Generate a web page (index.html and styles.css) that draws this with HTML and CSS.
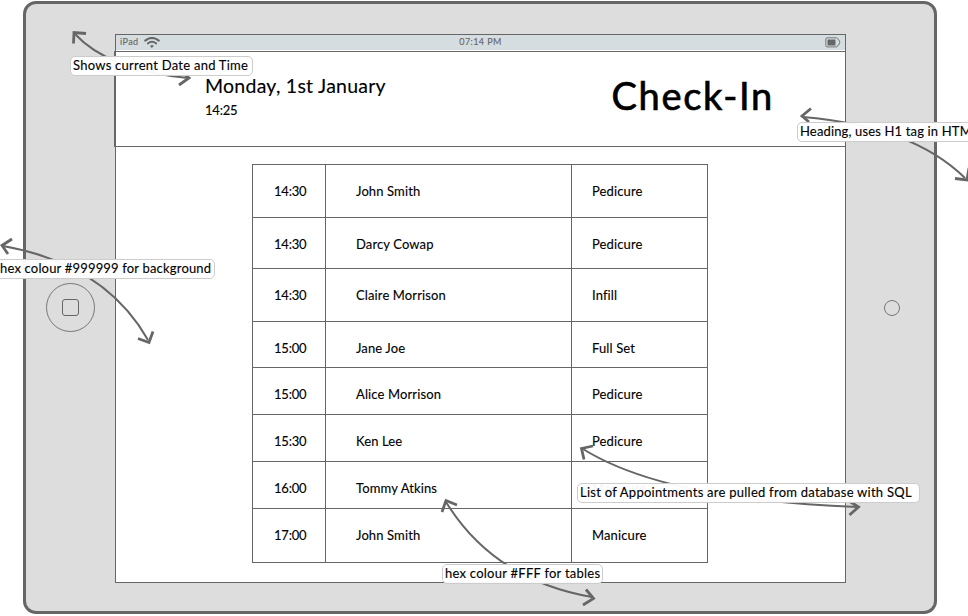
FILE: index.html
```html
<!DOCTYPE html>
<html lang="en">
<head>
<meta charset="utf-8">
<title>Check-In</title>
<link rel="stylesheet" href="styles.css">
</head>
<body>
<div class="device">
  <div class="bezel bezel-left"><div class="home"><div class="home-mark"></div></div></div>
  <main class="screen">
    <div class="status">
      <div class="carrier"><span>iPad</span>
        <svg width="16" height="12" viewBox="0 0 16 12" fill="none" stroke="#666" stroke-linecap="round"><path d="M1.2 3.6Q8-1.8 14.8 3.6" stroke-width="2"/><path d="M3.8 6.4Q8 3 12.2 6.4" stroke-width="1.9"/><path d="M6.6 8.9Q8 7.8 9.4 8.9L8 10.4Z" fill="#666" stroke-width=".7"/></svg>
      </div>
      <span class="clock">07:14 PM</span>
      <svg class="battery" width="16" height="11" viewBox="0 0 16 11" fill="none" stroke="#777"><path d="M2 .8H11.5Q12.8.8 13 2.5Q14.8 3 14.8 5.3Q14.8 7.8 13 8Q12.8 9.9 11.5 9.9H2Q.8 9.9.8 8.7V2Q.8.8 2 .8Z"/><path d="M2.5 2.5H10.5V8.5H2.5Z" fill="#666" stroke="none"/></svg>
    </div>
    <header class="top">
      <div class="when"><div class="date">Monday, 1st January</div><div class="time">14:25</div></div>
      <h1>Check-In</h1>
    </header>
    <div class="list">
      <div class="row tall"><span>14:30</span><span>John Smith</span><span>Pedicure</span></div>
      <div class="row mid"><span>14:30</span><span>Darcy Cowap</span><span>Pedicure</span></div>
      <div class="row tall"><span>14:30</span><span>Claire Morrison</span><span>Infill</span></div>
      <div class="row short"><span>15:00</span><span>Jane Joe</span><span>Full Set</span></div>
      <div class="row"><span>15:00</span><span>Alice Morrison</span><span>Pedicure</span></div>
      <div class="row"><span>15:30</span><span>Ken Lee</span><span>Pedicure</span></div>
      <div class="row"><span>16:00</span><span>Tommy Atkins</span><span>Manicure</span></div>
      <div class="row last"><span>17:00</span><span>John Smith</span><span>Manicure</span></div>
    </div>
  </main>
  <div class="bezel bezel-right"><div class="camera"></div></div>
</div>

<svg class="arrows" width="968" height="616" viewBox="0 0 968 616">
  <g class="shaft">
    <path d="M75 34Q108 70 188 78"/>
    <path d="M803 117Q912 126 965 178"/>
    <path d="M3 246Q105 264 148 340"/>
    <path d="M583 449Q665 500 857 507"/>
    <path d="M446 502Q494 580 592 597"/>
  </g>
  <g class="head">
    <path d="M86 33.5L74 32.5L73.5 43.5"/><path d="M179 85L189 78L181 72"/>
    <path d="M811 108.5L802 116L809 122"/><path d="M955 178.5L967 180L969 168"/>
    <path d="M12 239L2 245.5L8 254"/><path d="M138 338.5L149 342.5L153 331.5"/>
    <path d="M593 446L581.5 448.5L584 459.5"/><path d="M849 501L858.5 507L849.5 515"/>
    <path d="M457 505L446 500.5L442 512"/><path d="M586 589.5L593.5 598.5L583 605"/>
  </g>
</svg>
<div class="note note-date">Shows current Date and Time</div>
<div class="note note-heading">Heading, uses H1 tag in HTML</div>
<div class="note note-background">hex colour #999999 for background</div>
<div class="note note-sql">List of Appointments are pulled from database with SQL</div>
<div class="note note-tables">hex colour #FFF for tables</div>
</body>
</html>
```
FILE: styles.css
```css
* { box-sizing: border-box; }
body {
  margin: 0;
  padding: 1px 0 0 23px;
  width: 968px;
  height: 616px;
  overflow: hidden;
  position: relative;
  background: #fff;
  color: #000;
  font: 13px/18px Lato, "Open Sans", sans-serif;
  letter-spacing: .25px;
  -webkit-text-stroke: .12px currentColor;
}
.device {
  display: flex;
  width: 914px;
  height: 613px;
  border: 3px solid #666;
  border-radius: 13px;
  background: #ddd;
}
.bezel { display: flex; align-items: center; }
.bezel-left { width: 89px; padding-left: 20px; }
.bezel-right { flex: 1; padding-left: 38px; }
.home {
  display: flex;
  align-items: center;
  justify-content: center;
  width: 49px;
  height: 49px;
  border: 1px solid #777;
  border-radius: 50%;
}
.home-mark { width: 17px; height: 17px; border: 1px solid #666; border-radius: 3px; }
.camera { width: 16px; height: 16px; border: 1px solid #777; border-radius: 50%; }
.screen {
  width: 731px;
  height: 549px;
  margin-top: 30px;
  border: 1px solid #666;
  background: #fff;
}
.status {
  display: grid;
  grid-template-columns: 1fr auto 1fr;
  align-items: center;
  height: 15px;
  padding: 0 4px 0 4px;
  background: #d6dde0;
  color: #666;
  font-size: 9px;
  line-height: 14px;
  letter-spacing: .4px;
}
.carrier { display: flex; align-items: center; gap: 6px; }
.clock, .carrier span { position: relative; top: -1px; }
.battery { justify-self: end; }
.top {
  display: flex;
  justify-content: space-between;
  height: 96px;
  margin: 1px -1px 0 -2px;
  padding: 21px 71px 0 90px;
  border: 1px solid #666;
}
.date { font-size: 19.5px; line-height: 26px; letter-spacing: .25px; }
.time { margin-top: 2px; letter-spacing: -.2px; }
h1 { margin: 0; font-size: 38px; font-weight: 400; line-height: 44px; letter-spacing: 1.7px; -webkit-text-stroke-width: .7px; }
.list { width: 456px; margin: 17px 0 0 136px; border-top: 1px solid #666; }
.row { display: grid; grid-template-columns: 74px 246px 136px; height: 47px; letter-spacing: .12px; }
.row span { padding: 17px 0 0 20px; border: solid #666; border-width: 0 1px 1px 0; }
.row span:first-child { padding-left: 21px; border-left-width: 1px; letter-spacing: -.2px; }
.row span:nth-child(2) { padding-left: 30px; }
.tall { height: 53px; }
.mid { height: 51px; }
.short { height: 46px; }
.last { height: 54px; }
.arrows { position: absolute; left: 0; top: 0; fill: none; stroke: #666; }
.shaft { stroke-width: 2; }
.head { stroke-width: 2.8; }
.note {
  position: absolute;
  height: 20px;
  padding-left: 2px;
  border: 1px solid #ccc;
  border-radius: 5px;
  background: rgba(255, 255, 255, .96);
  line-height: 17px;
  white-space: nowrap;
}
.note-date { left: 70px; top: 56px; width: 183px; }
.note-heading { left: 797px; top: 122px; width: 182px; letter-spacing: .15px; }
.note-background { left: -4px; top: 259px; width: 219px; padding-left: 3px; letter-spacing: .18px; }
.note-sql { left: 577px; top: 483px; width: 343px; }
.note-tables { left: 442px; top: 564px; width: 161px; }
```
